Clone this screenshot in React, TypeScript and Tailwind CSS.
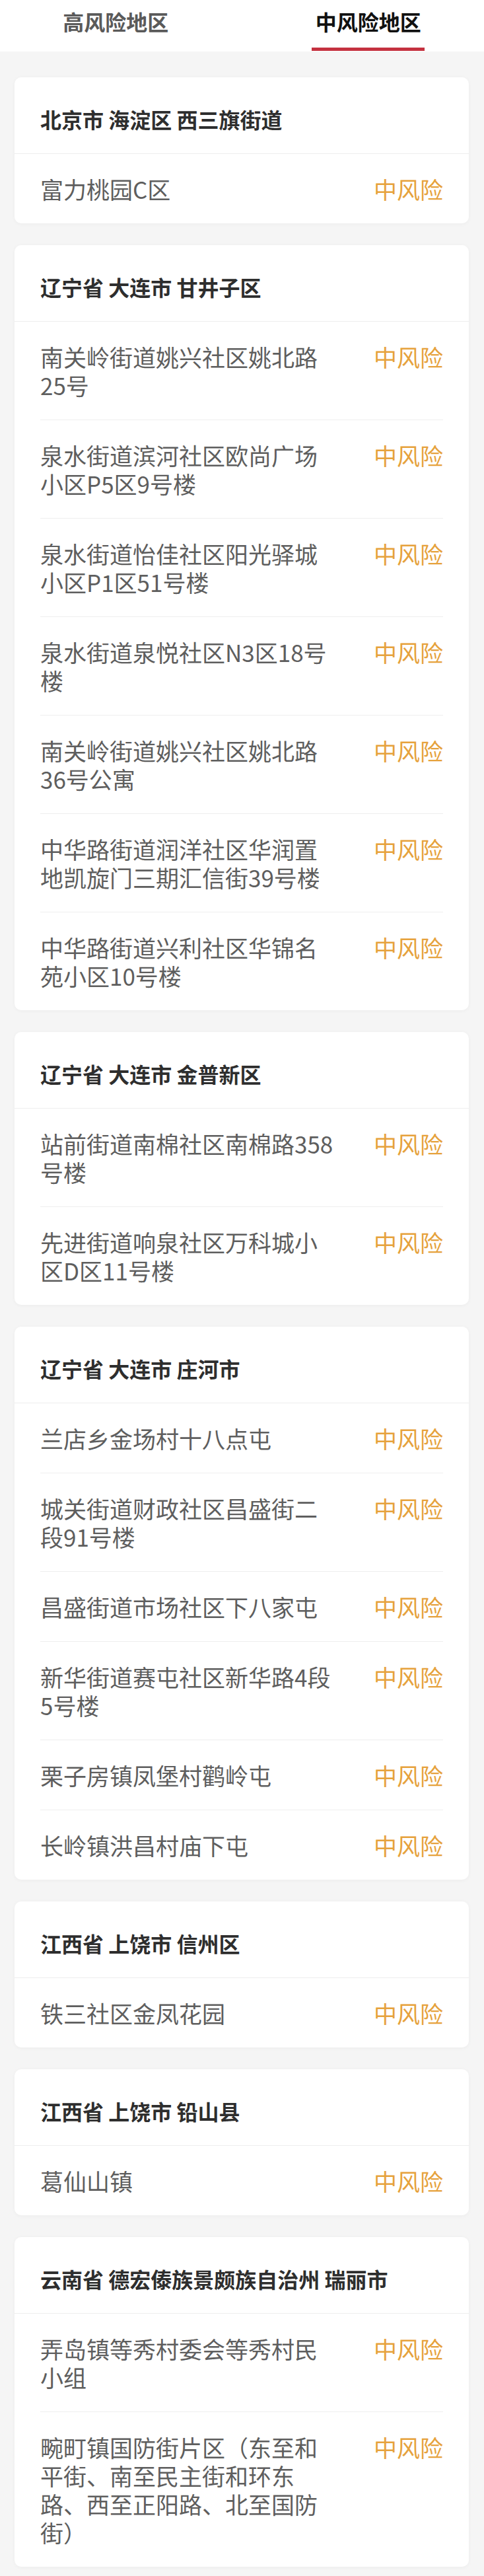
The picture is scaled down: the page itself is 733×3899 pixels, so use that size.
import { useState } from 'react'

interface Area {
  region: string
  places: string[]
}

const areas: Area[] = [
  { region: '北京市 海淀区 西三旗街道', places: ['富力桃园C区'] },
  {
    region: '辽宁省 大连市 甘井子区',
    places: [
      '南关岭街道姚兴社区姚北路25号',
      '泉水街道滨河社区欧尚广场小区P5区9号楼',
      '泉水街道怡佳社区阳光驿城小区P1区51号楼',
      '泉水街道泉悦社区N3区18号楼',
      '南关岭街道姚兴社区姚北路36号公寓',
      '中华路街道润洋社区华润置地凯旋门三期汇信街39号楼',
      '中华路街道兴利社区华锦名苑小区10号楼',
    ],
  },
  {
    region: '辽宁省 大连市 金普新区',
    places: ['站前街道南棉社区南棉路358号楼', '先进街道响泉社区万科城小区D区11号楼'],
  },
  {
    region: '辽宁省 大连市 庄河市',
    places: [
      '兰店乡金场村十八点屯',
      '城关街道财政社区昌盛街二段91号楼',
      '昌盛街道市场社区下八家屯',
      '新华街道赛屯社区新华路4段5号楼',
      '栗子房镇凤堡村鹳岭屯',
      '长岭镇洪昌村庙下屯',
    ],
  },
  { region: '江西省 上饶市 信州区', places: ['铁三社区金凤花园'] },
  { region: '江西省 上饶市 铅山县', places: ['葛仙山镇'] },
  {
    region: '云南省 德宏傣族景颇族自治州 瑞丽市',
    places: [
      '弄岛镇等秀村委会等秀村民小组',
      '畹町镇国防街片区（东至和平街、南至民主街和环东路、西至正阳路、北至国防街）',
    ],
  },
]

function Tabs({ active, onChange }: { active: number; onChange: (i: number) => void }) {
  const labels = ['高风险地区', '中风险地区']
  return (
    <div className="grid h-[78px] grid-cols-2 gap-x-[32px] bg-white">
      {labels.map((label, i) => (
        <button
          key={label}
          onClick={() => onChange(i)}
          className="flex h-full flex-col items-center justify-between pt-[16px] pb-[1px]"
        >
          <span
            className={
              i === active
                ? 'text-[32px] leading-[32px] font-bold text-[#111]'
                : 'text-[32px] leading-[32px] font-bold text-[#5a5a5a]'
            }
          >
            {label}
          </span>
          {i === active ? (
            <span className="h-[5px] w-[171px] bg-[#c4313f]" />
          ) : (
            <span className="h-[5px] w-[171px]" />
          )}
        </button>
      ))}
    </div>
  )
}

function AreaCard({ area }: { area: Area }) {
  return (
    <div className="ml-[22px] mr-[23px] rounded-[10px] bg-white shadow-[0_1px_6px_rgba(0,0,0,0.04)]">
      <div className="border-b border-[#eeeeee] px-[39px] pt-[47px] pb-[36px] text-[32px] leading-[32px] font-bold text-[#2e2e2e]">
        {area.region}
      </div>
      <div className="px-[39px]">
        {area.places.map((place, i) => (
          <div
            key={place}
            className={
              i === 0
                ? 'flex items-start justify-between py-[31px]'
                : 'flex items-start justify-between border-t border-[#eeeeee] py-[31px]'
            }
          >
            <div className="w-[450px] text-[35px] leading-[43px] text-[#5e5e5e]">{place}</div>
            <div className="shrink-0 text-[35px] leading-[43px] text-[#e6a23c]">中风险</div>
          </div>
        ))}
      </div>
    </div>
  )
}

export default function App() {
  const [tab, setTab] = useState(1)
  return (
    <div className="min-h-screen bg-[#f5f5f5] font-['Noto_Sans_CJK_SC','Noto_Sans',sans-serif]">
      <Tabs active={tab} onChange={setTab} />
      <div className="flex flex-col gap-[33px] pt-[39px] pb-[14px]">
        {areas.map((area) => (
          <AreaCard key={area.region} area={area} />
        ))}
      </div>
    </div>
  )
}
